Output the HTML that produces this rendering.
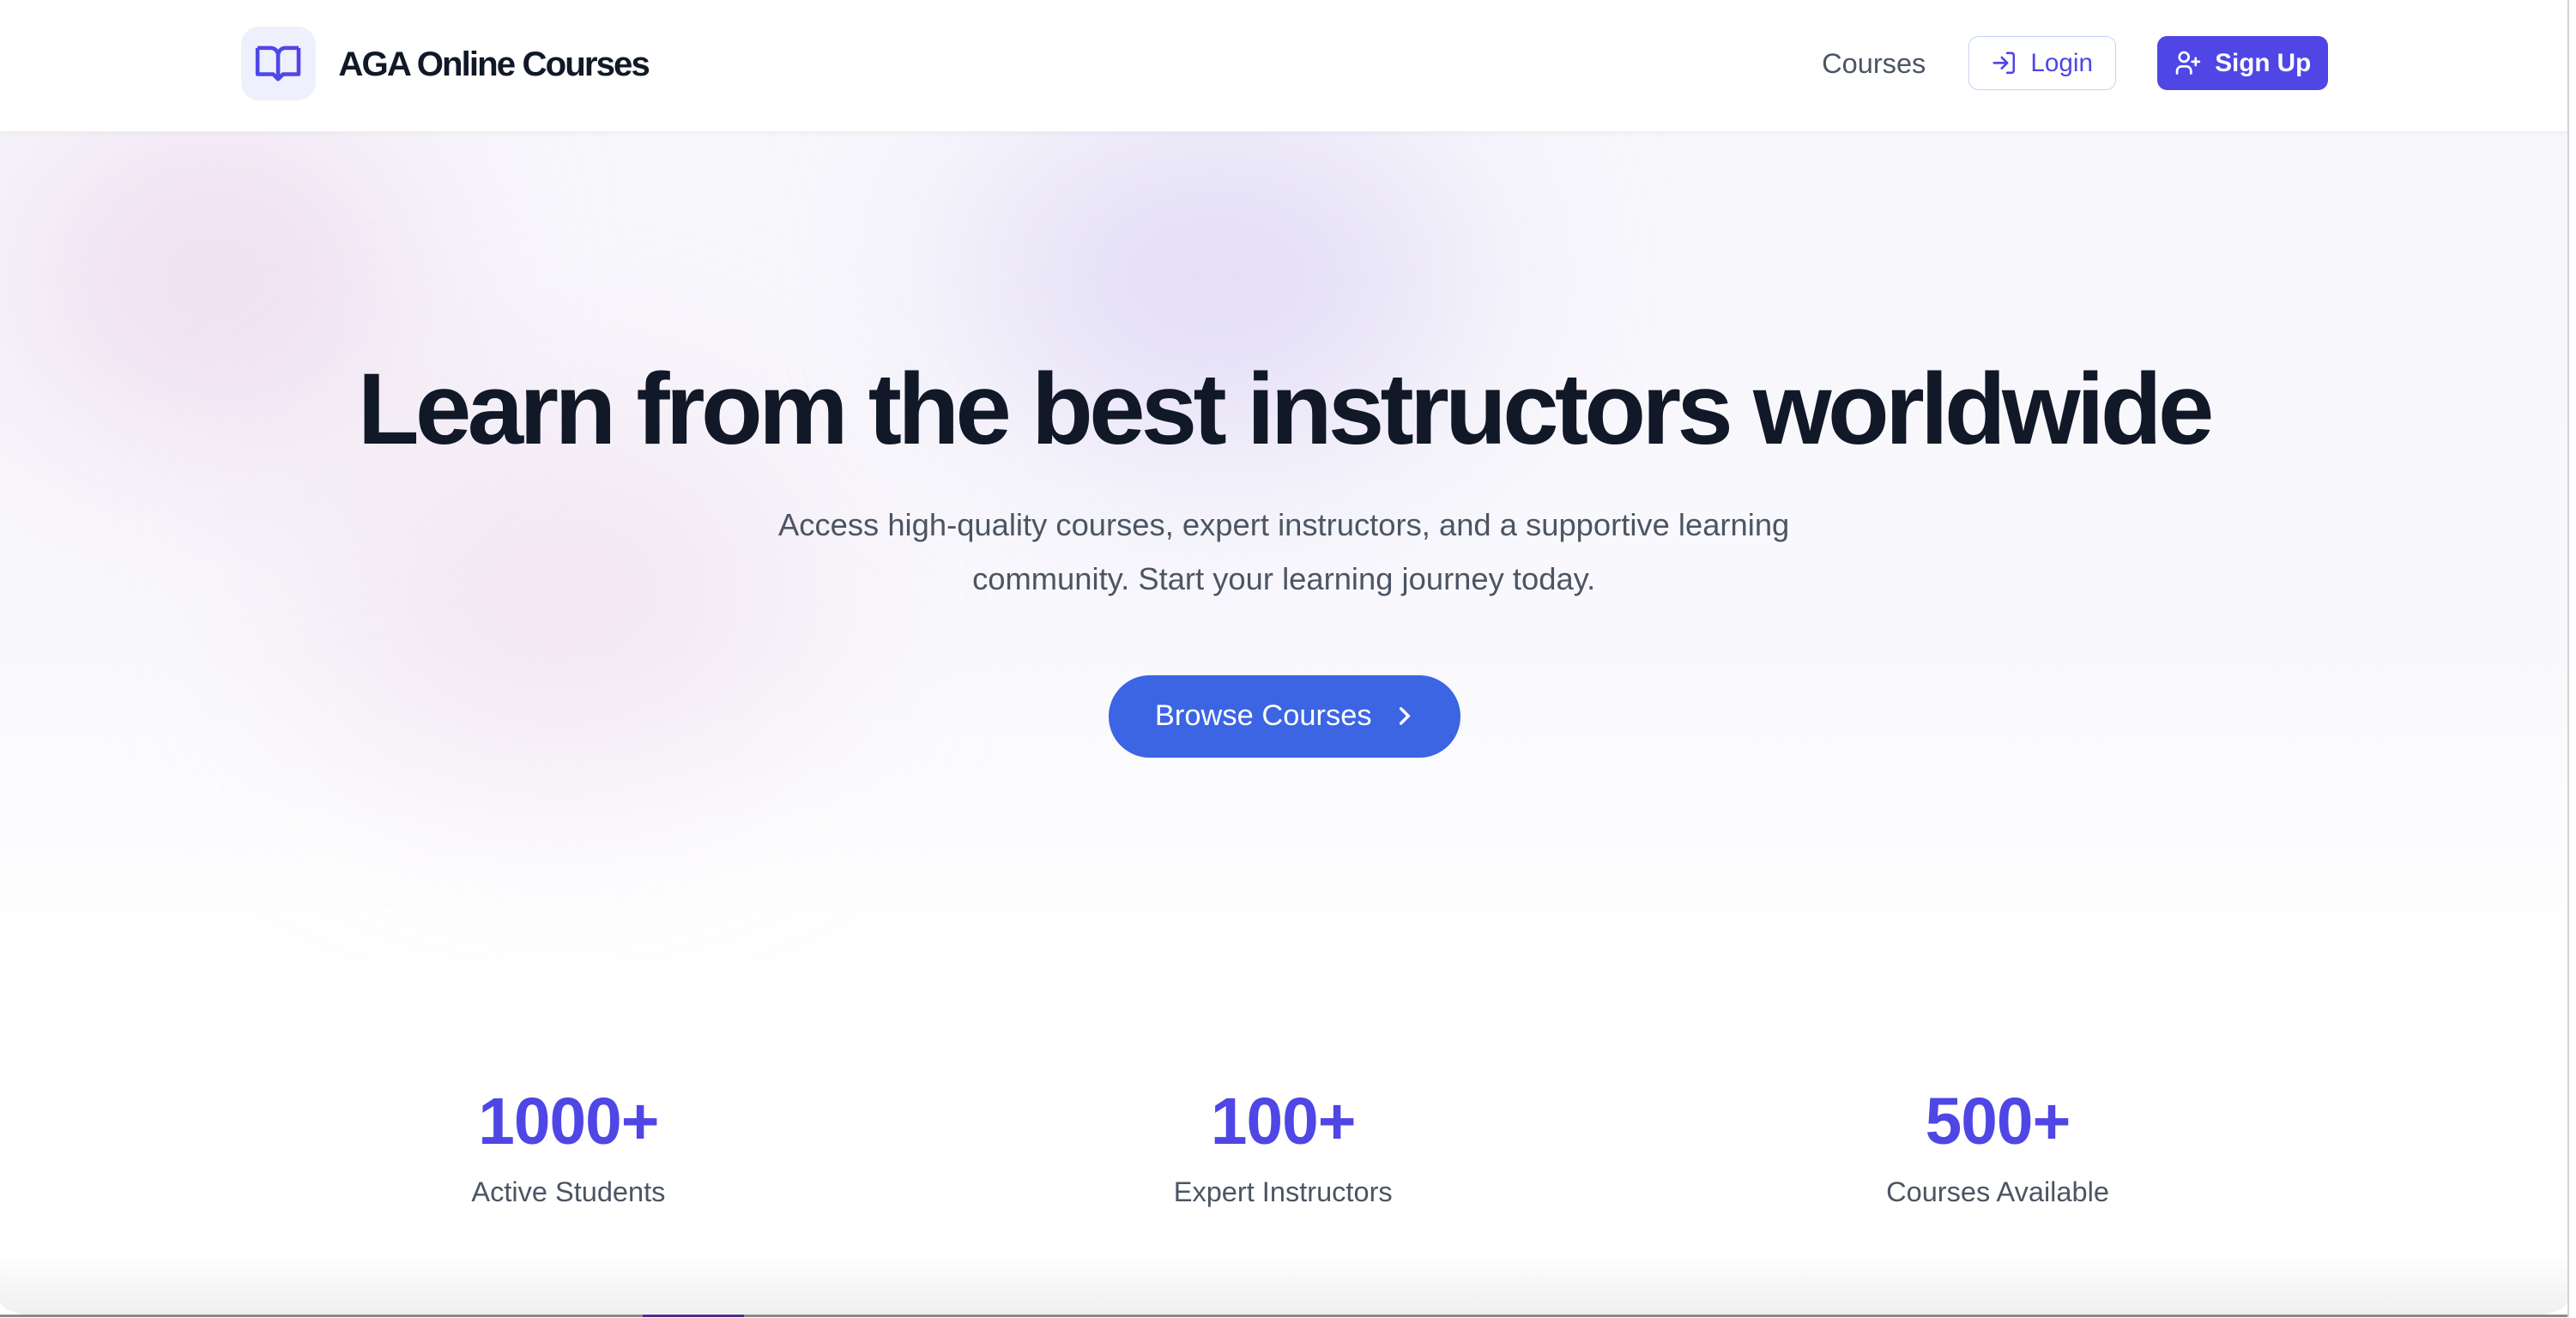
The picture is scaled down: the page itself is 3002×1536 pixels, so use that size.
<!DOCTYPE html>
<html><head><meta charset="utf-8"><style>
html,body{margin:0;padding:0;background:#fff;overflow:hidden}
#w{zoom:1.9145;width:1568px;height:802px;position:relative;overflow:hidden;font-family:"Liberation Sans",sans-serif;background:#fff}
.hdr{position:absolute;left:0;top:0;width:1563px;height:80px;background:#fff;border-bottom:1px solid #ececf2;z-index:5;box-shadow:0 1px 3px rgba(0,0,0,.04)}
.logo{position:absolute;left:147px;top:16px;width:45px;height:45px;border-radius:11px;background:#eef0fd}
.brand{position:absolute;left:206px;top:27px;font-size:21px;font-weight:bold;color:#111827;letter-spacing:-1px}
.nav{position:absolute;top:29px;left:1109px;font-size:17px;color:#4b5563}
.btn{position:absolute;top:22px;height:33px;border-radius:6px;box-sizing:border-box;font-size:15.5px;display:flex;align-items:center;justify-content:center;gap:8px}
.login{left:1198px;width:90px;border:1px solid #c7d2fe;color:#4f46e5;background:#fff}
.signup{left:1313px;width:104px;background:#4f46e5;color:#fff;font-weight:bold}
.hero{position:absolute;left:0;top:80px;width:1563px;height:520px;background:linear-gradient(#f8f7fc 0%,#f9f8fc 60%,#fff 100%)}
.blob{position:absolute;border-radius:50%;filter:blur(60px)}
h1{position:absolute;left:0;width:1563px;top:209px;margin:0;text-align:center;font-size:61.5px;font-weight:bold;color:#111827;letter-spacing:-2.5px;line-height:80px}
.sub{position:absolute;left:0;width:1563px;top:303px;text-align:center;font-size:19px;line-height:33px;color:#4b5563}
.browse{position:absolute;left:675px;top:411px;width:214px;height:50px;border-radius:25px;background:#3b65e3;color:#fff;font-size:18px;display:flex;align-items:center;justify-content:center;gap:14px}
.stat{position:absolute;top:660px;width:300px;text-align:center}
.stat b{display:block;font-size:40px;color:#4f46e5;line-height:46px;letter-spacing:-0.5px}
.stat span{display:block;margin-top:10px;font-size:17px;color:#4b5563}
.edge{position:absolute;left:1563px;top:0;width:1px;height:802px;background:#d4d4d8}
.right{position:absolute;left:1564px;top:0;width:4px;height:802px;background:#fff}
.bot{position:absolute;left:0;top:762px;width:1563px;height:40px;background:linear-gradient(#fff,#efefef);border-radius:0 0 30px 30px/0 0 10px 10px}
</style></head><body><div id="w">
<div class="hero">
 <div class="blob" style="left:10px;top:-10px;width:240px;height:200px;background:rgba(232,205,232,.6)"></div>
 <div class="blob" style="left:590px;top:-10px;width:300px;height:200px;background:rgba(221,214,245,.8)"></div>
 <div class="blob" style="left:190px;top:170px;width:300px;height:220px;background:rgba(236,214,236,.5)"></div>
</div>
<div class="hdr">
 <div class="logo"><svg width="45" height="45" viewBox="0 0 45 45"><path d="M10 13h8a4.5 4.5 0 0 1 4.5 4.5V31M35 13h-8a4.5 4.5 0 0 0-4.5 4.5M10 13v16h9.5l3 3 3-3H35V13" fill="none" stroke="#4f46e5" stroke-width="2.4" stroke-linejoin="round"/></svg></div>
 <div class="brand">AGA Online Courses</div>
 <div class="nav">Courses</div>
 <div class="btn login"><svg width="16" height="16" viewBox="0 0 24 24" fill="none" stroke="#4f46e5" stroke-width="2" stroke-linecap="round" stroke-linejoin="round"><path d="M15 3h4a2 2 0 0 1 2 2v14a2 2 0 0 1-2 2h-4M10 17l5-5-5-5M15 12H3"/></svg>Login</div>
 <div class="btn signup"><svg width="17" height="17" viewBox="0 0 24 24" fill="none" stroke="#fff" stroke-width="2" stroke-linecap="round"><circle cx="9" cy="7" r="4"/><path d="M3 21v-2a4 4 0 0 1 4-4h4a4 4 0 0 1 4 4v2M19 8v6M16 11h6"/></svg>Sign Up</div>
</div>
<h1>Learn from the best instructors worldwide</h1>
<div class="sub">Access high-quality courses, expert instructors, and a supportive learning<br>community. Start your learning journey today.</div>
<div class="browse">Browse Courses <svg width="12" height="14" viewBox="0 0 12 14"><path d="M4 2.5l4.5 4.5L4 11.5" fill="none" stroke="#fff" stroke-width="1.8" stroke-linecap="round"/></svg></div>
<div class="stat" style="left:196px"><b>1000+</b><span>Active Students</span></div>
<div class="stat" style="left:631px"><b>100+</b><span>Expert Instructors</span></div>
<div class="stat" style="left:1066px"><b>500+</b><span>Courses Available</span></div>
<div class="bot"></div>
<div class="edge"></div><div class="right"></div>
<div style="position:absolute;left:0;top:800px;width:1563px;height:2px;background:#8a8a8a"></div>
<div style="position:absolute;left:391px;top:800px;width:62px;height:2px;background:#4c2d8a"></div>
</div></body></html>
